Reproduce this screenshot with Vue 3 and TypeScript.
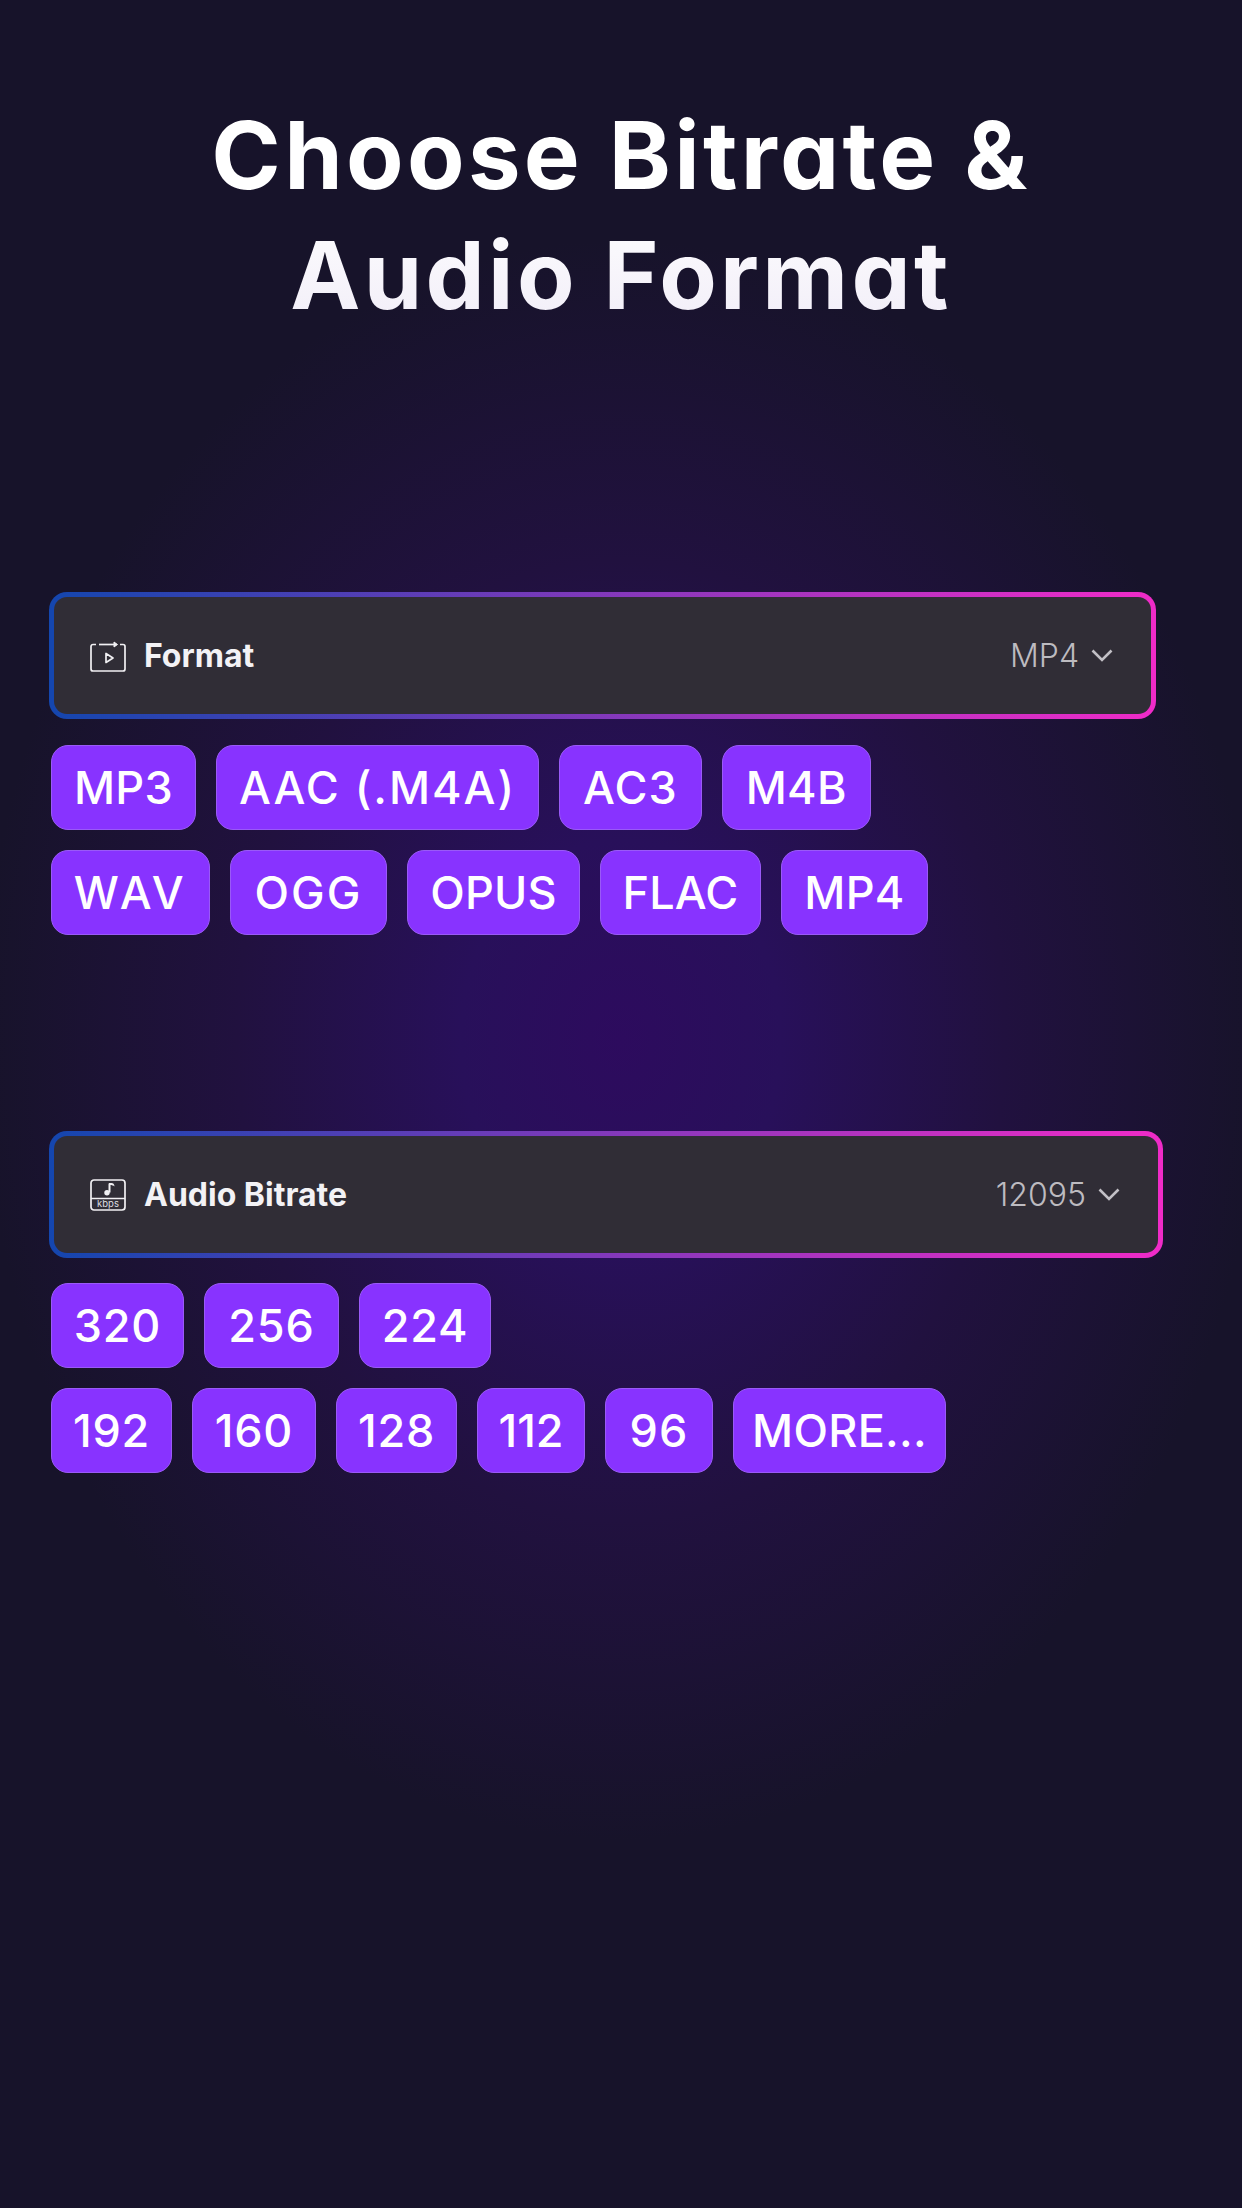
<script setup lang="ts">
interface Chip { label: string; width: number; track: number }
const formatRows: Chip[][] = [
  [{ label: 'MP3', width: 145, track: 0.3 }, { label: 'AAC (.M4A)', width: 323, track: 2 }, { label: 'AC3', width: 143, track: 1.2 }, { label: 'M4B', width: 148.5, track: 0.3 }],
  [{ label: 'WAV', width: 159, track: 3.5 }, { label: 'OGG', width: 157, track: 2 }, { label: 'OPUS', width: 173, track: 0.2 }, { label: 'FLAC', width: 161, track: 0.2 }, { label: 'MP4', width: 147, track: 0.3 }],
]
const bitrateRows: Chip[][] = [
  [{ label: '320', width: 133, track: 0.8 }, { label: '256', width: 135, track: 0.8 }, { label: '224', width: 132, track: 0.8 }],
  [{ label: '192', width: 121, track: 0.8 }, { label: '160', width: 124, track: 0.8 }, { label: '128', width: 121, track: 0.8 }, { label: '112', width: 108, track: 0 }, { label: '96', width: 108, track: 1.2 }, { label: 'MORE...', width: 213, track: 0.3 }],
]
</script>

<template>
  <main class="page">
    <h1 class="title">Choose Bitrate &amp;<br />Audio Format</h1>

    <section class="group group-format">
      <div class="picker picker-format">
        <div class="picker-label">
          <svg class="icon" viewBox="0 0 36 32" fill="none" stroke="#f1f0f3" stroke-width="1.7">
            <path d="M6 4.500H3a2 2 0 0 0-2 2V29a2 2 0 0 0 2 2h30a2 2 0 0 0 2-2V6.500a2 2 0 0 0-2-2h-3" />
            <path d="M9 4.500H26" />
            <path d="M24 2l3.500 2.500L24 7z" fill="#f1f0f3" stroke-width="1" />
            <path d="M16 13.500v9l7-4.500z" stroke-linejoin="round" />
          </svg>
          <span>Format</span>
        </div>
        <div class="picker-value">
          <span>MP4</span>
          <svg class="chevron" viewBox="0 0 22 13" fill="none" stroke="#c2c0c6" stroke-width="2.600">
            <path d="M1.500 1.500 11 11 20.500 1.500" />
          </svg>
        </div>
      </div>
      <div v-for="(row, r) in formatRows" :key="r" class="chip-row">
        <button v-for="chip in row" :key="chip.label" class="chip" :style="{ width: chip.width + 'px', letterSpacing: chip.track + 'px' }">{{ chip.label }}</button>
      </div>
    </section>

    <section class="group group-bitrate">
      <div class="picker picker-bitrate">
        <div class="picker-label">
          <svg class="icon" viewBox="0 0 36 32" fill="none" stroke="#f1f0f3" stroke-width="1.700">
            <rect x="1" y="1" width="34" height="30" rx="3" />
            <path d="M1 19.500H35" />
            <path d="M19.500 4.500v9" stroke-width="2" />
            <circle cx="17" cy="13.800" r="2.700" fill="#f1f0f3" stroke="none" />
            <path d="M19 4h2.500c1.500 0 3 1 3 3.500-1-1-2-1.500-5.500-1.500z" fill="#f1f0f3" stroke="none" />
            <text x="18" y="28.300" text-anchor="middle" class="kbps">kbps</text>
          </svg>
          <span>Audio Bitrate</span>
        </div>
        <div class="picker-value">
          <span>12095</span>
          <svg class="chevron" viewBox="0 0 22 13" fill="none" stroke="#c2c0c6" stroke-width="2.600">
            <path d="M1.500 1.500 11 11 20.500 1.500" />
          </svg>
        </div>
      </div>
      <div v-for="(row, r) in bitrateRows" :key="r" class="chip-row">
        <button v-for="chip in row" :key="chip.label" class="chip" :style="{ width: chip.width + 'px', letterSpacing: chip.track + 'px' }">{{ chip.label }}</button>
      </div>
    </section>
  </main>
</template>

<style>
html, body { margin: 0; background: #17132a; }
</style>

<style scoped>
.page {
  box-sizing: border-box;
  width: 1242px;
  height: 2208px;
  overflow: hidden;
  padding-top: 95px;
  background: radial-gradient(ellipse 640px 800px at 621px 1040px, #2d0b5e 0%, #28105a 25%, #21113f 60%, #17132a 100%), #17132a;
  font-family: Inter, "Noto Sans", sans-serif;
}
.title {
  margin: 0;
  font-size: 94px;
  line-height: 120px;
  font-weight: 700;
  text-align: center;
  letter-spacing: 3.300px;
  font-feature-settings: "cv11" 1;
  background: linear-gradient(180deg, #ffffff 40%, #f1edf8 100%);
  -webkit-background-clip: text;
  background-clip: text;
  color: transparent;
}
.group { padding-left: 49px; }
.group-format { margin-top: 257px; }
.group-bitrate { margin-top: 196px; }
.picker {
  box-sizing: border-box;
  height: 127px;
  border: 5px solid transparent;
  border-radius: 18px;
  background: linear-gradient(#302d36, #302d36) padding-box, linear-gradient(90deg, #1446ae 0%, #f02bc8 100%) border-box;
  display: flex;
  align-items: center;
  justify-content: space-between;
  padding: 0 38px 0 36px;
  margin-bottom: 26px;
}
.picker-format { width: 1107px; }
.picker-bitrate { width: 1114px; margin-bottom: 25px; }
.picker-label {
  display: flex;
  align-items: center;
  gap: 18px;
  font-size: 32px;
  font-weight: 700;
  color: #f3f2f5;
}
.picker-value {
  display: flex;
  align-items: center;
  gap: 12px;
  font-size: 32px;
  font-weight: 300;
  color: #bdbbc0;
}
.icon { width: 36px; height: 32px; flex: none; }
.kbps { font-size: 9.500px; font-weight: 400; font-family: Inter, sans-serif; fill: #dedde1; stroke: none; }
.chevron { width: 22px; height: 13px; flex: none; }
.chip-row {
  display: flex;
  gap: 20px;
  padding-left: 2px;
  margin-bottom: 20px;
}
.chip-row:last-child { margin-bottom: 0; }
.chip {
  box-sizing: border-box;
  height: 85px;
  padding: 0;
  border: 1px solid #9a5af7;
  border-radius: 17px;
  background: #8833ff;
  color: #fff;
  font-family: inherit;
  font-size: 45px;
  font-weight: 470;
  text-align: center;
}
</style>
